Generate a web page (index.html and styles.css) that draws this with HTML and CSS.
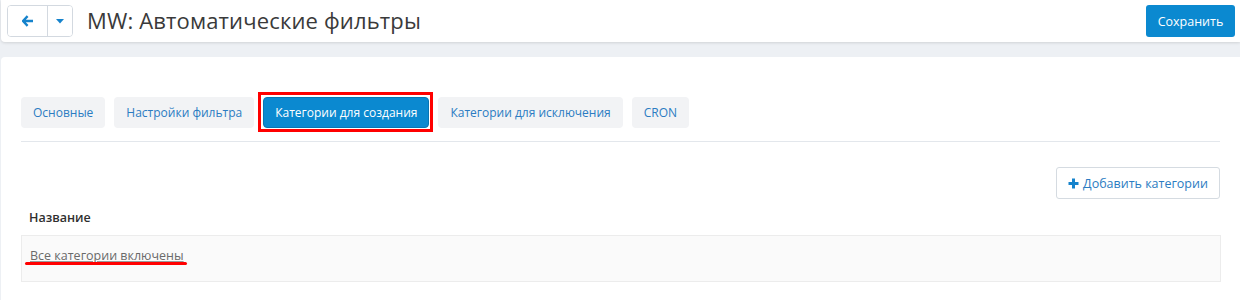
FILE: index.html
```html
<!DOCTYPE html>
<html lang="ru">
<head>
<meta charset="utf-8">
<title>MW: Автоматические фильтры</title>
<link rel="stylesheet" href="styles.css">
</head>
<body>
<header class="topbar">
  <div class="btn-group">
    <button class="btn-back" aria-label="Назад">
      <svg width="12" height="12" viewBox="0 0 12 12"><path d="M5.6 1.2 L1 6 L5.6 10.8 M1.4 6 H11" fill="none" stroke="#1683cc" stroke-width="2.4" stroke-linejoin="round"/></svg>
    </button>
    <button class="btn-caret" aria-label="Меню">
      <svg width="8" height="5" viewBox="0 0 8 5"><path d="M0 0 H8 L4 4.5 Z" fill="#1683cc"/></svg>
    </button>
  </div>
  <h1 class="title">MW: Автоматические фильтры</h1>
  <button class="btn-save">Сохранить</button>
</header>

<main class="panel">
  <nav class="tabs">
    <a class="tab">Основные</a>
    <a class="tab">Настройки фильтра</a>
    <span class="tab-mark"><a class="tab tab-active">Категории для создания</a></span>
    <a class="tab">Категории для исключения</a>
    <a class="tab">CRON</a>
  </nav>
  <div class="toolbar">
    <button class="btn-add">
      <svg width="11" height="11" viewBox="0 0 11 11"><path d="M5.5 0.5 V10.5 M0.5 5.5 H10.5" stroke="#1683cc" stroke-width="3"/></svg>
      Добавить категории
    </button>
  </div>
  <div class="table">
    <div class="thead">Название</div>
    <div class="row"><a class="row-link">Все категории включены</a></div>
  </div>
</main>
</body>
</html>
```
FILE: styles.css
```css
* { box-sizing: border-box; }
body {
  margin: 0;
  background: #edf0f4;
  font-family: "Open Sans", "Noto Sans", sans-serif;
  font-size: 12px;
  color: #333;
}
button { font-family: inherit; cursor: pointer; }

.topbar {
  margin-left: 1px;
  height: 42px;
  background: #fff;
  border-radius: 0 0 0 4px;
  box-shadow: 0 1px 3px rgba(0,0,0,0.12);
  display: flex;
  align-items: center;
  padding: 0 5px 0 6px;
}
.btn-group {
  display: flex;
  height: 32px;
  border: 1px solid #d3d9e0;
  border-radius: 4px;
  overflow: hidden;
}
.btn-back, .btn-caret {
  border: 0;
  background: #fff;
  display: flex;
  align-items: center;
  justify-content: center;
  padding: 0;
}
.btn-back { width: 40px; border-right: 1px solid #d3d9e0; }
.btn-caret { width: 24px; }
.title {
  margin: 0 0 0 14px;
  font-size: 22px;
  font-weight: 400;
  color: #3a3a3a;
  flex: 1;
  line-height: 32px;
  position: relative;
  top: -1px;
  letter-spacing: 0.15px;
}
.btn-save {
  height: 32px;
  width: 89px;
  border: 0;
  border-radius: 3px;
  background: #0b89d0;
  color: #fff;
  font-size: 12.5px;
  padding: 0;
}

.panel {
  margin: 15px 0 0 1px;
  background: #fff;
  border-radius: 4px 0 0 0;
  padding: 40px 20px 18px 20px;
  min-height: 243px;
}
.tabs {
  display: flex;
  gap: 9px;
  padding-bottom: 13px;
  border-bottom: 1px solid #e3e7ec;
}
.tab {
  display: block;
  height: 31px;
  line-height: 31px;
  padding: 0 12px;
  background: #f2f3f5;
  color: #2b7cc2;
  border-radius: 4px;
  white-space: nowrap;
}
.tab-mark { position: relative; display: block; }
.tab-mark::after {
  content: "";
  position: absolute;
  left: -5px; top: -5px; right: -4px; bottom: -4px;
  border: 3px solid #f00;
  pointer-events: none;
}
.tab-active {
  background: #0b89d0;
  color: #fff;
  border: 1px solid #0875b3;
  line-height: 29px;
  padding: 0 11px;
}

.toolbar {
  display: flex;
  justify-content: flex-end;
  padding-top: 25px;
}
.btn-add {
  height: 32px;
  width: 164px;
  border: 1px solid #d5dbe1;
  border-radius: 3px;
  background: #fff;
  color: #2b7cc2;
  font-size: 12.5px;
  display: flex;
  align-items: center;
  justify-content: center;
  gap: 4px;
  padding: 0;
}

.table { margin-top: 3px; }
.thead {
  height: 33px;
  line-height: 32px;
  padding-left: 8px;
  font-weight: 600;
  color: #2f2f2f;
  font-size: 12.5px;
}
.row {
  height: 47px;
  margin-right: -1px;
  border: 1px solid #ececec;
  background: #fafafa;
  display: flex;
  align-items: center;
  padding-left: 8px;
}
.row-link {
  color: #6a6a6a;
  text-decoration: underline;
  text-decoration-color: #9a9a9a;
  position: relative;
  top: -3px;
  font-size: 12.5px;
}
.row-link::after {
  content: "";
  position: absolute;
  left: -5px;
  right: -3px;
  bottom: -1px;
  height: 3px;
  border-radius: 2px;
  background: #f00;
}
```
